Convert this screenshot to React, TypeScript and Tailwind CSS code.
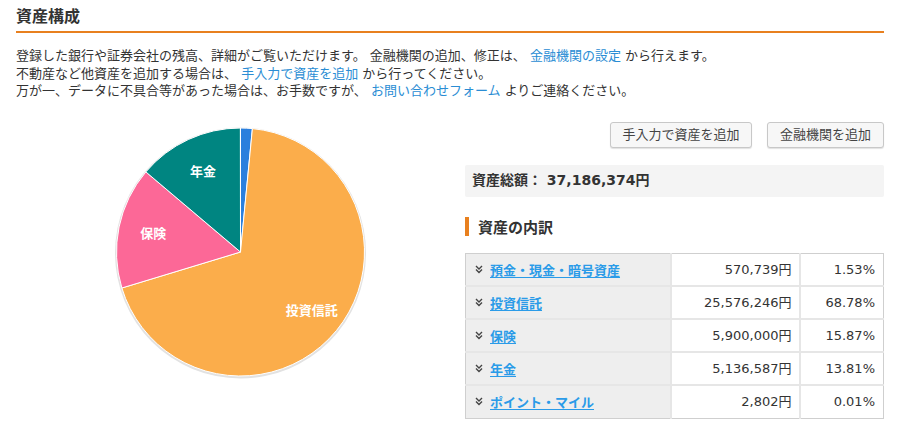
import React from 'react'

const FONT = { fontFamily: '"DejaVu Sans", "Noto Sans CJK JP", sans-serif' }

type Item = { name: string; amount: string; pct: number; color: string }

const items: Item[] = [
    { name: '預金・現金・暗号資産', amount: '570,739円', pct: 1.53, color: '#2b7fdd' },
    { name: '投資信託', amount: '25,576,246円', pct: 68.78, color: '#fbad4b' },
    { name: '保険', amount: '5,900,000円', pct: 15.87, color: '#fc6897' },
    { name: '年金', amount: '5,136,587円', pct: 13.81, color: '#008581' },
    { name: 'ポイント・マイル', amount: '2,802円', pct: 0.01, color: '#9c27b0' },
]

const labels: Record<string, boolean> = { '投資信託': true, '保険': true, '年金': true }

function Pie() {
    const cx = 224.5
    const cy = 130
    const r = 124
    let acc = 0
    const point = (frac: number, rad: number) => {
        const a = frac * Math.PI * 2 - Math.PI / 2
        return [cx + rad * Math.cos(a), cy + rad * Math.sin(a)]
    }
    return (
        <svg width="449" height="262" viewBox="0 0 449 262">
            <circle cx={cx} cy={cy + 1} r={r + 1.5} fill="#e2e2e2" />
            {items.map((it) => {
                const start = acc / 100
                acc += it.pct
                const end = acc / 100
                const [x1, y1] = point(start, r)
                const [x2, y2] = point(end, r)
                const large = end - start > 0.5 ? 1 : 0
                return (
                    <path
                        key={it.name}
                        d={`M${cx},${cy} L${x1},${y1} A${r},${r} 0 ${large} 1 ${x2},${y2} Z`}
                        fill={it.color}
                        stroke="#fff"
                        strokeWidth="1"
                        strokeLinejoin="round"
                    />
                )
            })}
            {(() => {
                let a2 = 0
                return items.map((it) => {
                    const mid = (a2 + it.pct / 2) / 100
                    a2 += it.pct
                    if (!labels[it.name]) return null
                    const [lx, ly] = point(mid, it.name === '投資信託' ? 92 : 89)
                    return (
                        <text
                            key={it.name}
                            x={lx}
                            y={ly + 4.5}
                            textAnchor="middle"
                            fill="#fff"
                            fontSize="13"
                            fontWeight="bold"
                            style={{ fontFamily: '"Noto Sans CJK JP", sans-serif' }}
                        >
                            {it.name}
                        </text>
                    )
                })
            })()}
        </svg>
    )
}

function Chevrons() {
    return (
        <svg width="8" height="9" viewBox="0 0 8 9" className="shrink-0">
            <path d="M1 1 L4 4 L7 1 M1 4.5 L4 7.5 L7 4.5" fill="none" stroke="#444" strokeWidth="1.4" />
        </svg>
    )
}

export default function App() {
    return (
        <div className="w-[908px] h-[432px] bg-white pl-4 pr-6 pt-[4px] text-[#333]" style={FONT}>
            <h1 className="text-[16px] font-bold leading-[22px] pb-[5px] border-b-2 border-[#e8801f]" style={{ fontFamily: '"Noto Sans CJK JP", sans-serif' }}>
                資産構成
            </h1>

            <div className="mt-[14px] text-[13px] leading-[17.5px]">
                <p>
                    登録した銀行や証券会社の残高、詳細がご覧いただけます。 金融機関の追加、修正は、 <a className="text-[#2a8dd4]">金融機関の設定</a> から行えます。
                </p>
                <p>
                    不動産など他資産を追加する場合は、 <a className="text-[#2a8dd4]">手入力で資産を追加</a> から行ってください。
                </p>
                <p>
                    万が一、データに不具合等があった場合は、お手数ですが、 <a className="text-[#2a8dd4]">お問い合わせフォーム</a> よりご連絡ください。
                </p>
            </div>

            <div className="flex mt-[22px]">
                <div className="w-[449px] shrink-0">
                    <Pie />
                </div>

                <div className="flex-1">
                    <div className="flex justify-end gap-[15px]">
                        <button className="h-[26px] w-[142px] rounded-[3px] border border-[#c8c8c8] bg-[#f7f7f7] text-[13px] text-[#444] shadow-[0_1px_1px_rgba(0,0,0,0.12)]">
                            手入力で資産を追加
                        </button>
                        <button className="h-[26px] w-[117px] rounded-[3px] border border-[#c8c8c8] bg-[#f7f7f7] text-[13px] text-[#444] shadow-[0_1px_1px_rgba(0,0,0,0.12)]">
                            金融機関を追加
                        </button>
                    </div>

                    <div className="mt-[17px] h-[32px] bg-[#f4f4f4] rounded-[2px] pl-[7px] flex items-center text-[14px] font-bold text-[#333]">
                        資産総額： 37,186,374円
                    </div>

                    <div className="mt-[20px] flex items-center gap-[9px]">
                        <div className="w-[4px] h-[19px] bg-[#e8801f]" />
                        <h2 className="text-[15px] font-bold leading-[19px]" style={{ fontFamily: '"Noto Sans CJK JP", sans-serif' }}>資産の内訳</h2>
                    </div>

                    <table className="mt-[17px] w-[419px] border-collapse border border-[#cfcfcf] text-[13px]">
                        <tbody>
                            {items.map((it) => (
                                <tr key={it.name} className="h-[33px] border-b-2 border-[#e6e6e6] last:border-b-0">
                                    <td className="w-[205px] bg-[#eeeeee] pl-[9px] border-r-2 border-[#e6e6e6]">
                                        <div className="flex items-center gap-[7px]">
                                            <Chevrons />
                                            <a className="text-[#2a9be8] font-bold underline underline-offset-2 text-[13px]" style={{ fontFamily: '"Noto Sans CJK JP", sans-serif' }}>
                                                {it.name}
                                            </a>
                                        </div>
                                    </td>
                                    <td className="w-[129px] text-right pr-[7px] border-r-2 border-[#e6e6e6]">{it.amount}</td>
                                    <td className="text-right pr-[8px]">{it.pct.toFixed(2)}%</td>
                                </tr>
                            ))}
                        </tbody>
                    </table>
                </div>
            </div>
        </div>
    )
}
